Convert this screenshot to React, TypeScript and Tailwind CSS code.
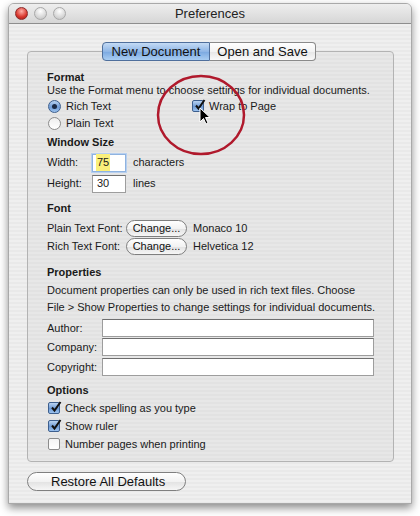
import { ReactNode } from 'react';

function Check({ on }: { on?: boolean }) {
  return (
    <span
      className={
        'relative inline-flex h-[12px] w-[12px] shrink-0 items-center justify-center rounded-[2px] border ' +
        (on
          ? 'border-[#3d5f8e] bg-[linear-gradient(#b9d3f1,#6e9bd6_55%,#9cc2ee)]'
          : 'border-[#8c8c8c] bg-[linear-gradient(#f4f4f4,#ffffff)]')
      }
    >
      {on && (
        <svg width="12" height="12" viewBox="0 0 12 12" className="absolute -top-[2px] left-[1px]">
          <path d="M2 6.5 L4.5 9.5 L10.5 1" stroke="#111" strokeWidth="2" fill="none" />
        </svg>
      )}
    </span>
  );
}

function Radio({ on }: { on?: boolean }) {
  return (
    <span
      className={
        'inline-flex h-[13px] w-[13px] shrink-0 items-center justify-center rounded-full border ' +
        (on
          ? 'border-[#3d5f8e] bg-[linear-gradient(#b9d3f1,#6e9bd6_55%,#9cc2ee)]'
          : 'border-[#8c8c8c] bg-[linear-gradient(#eeeeee,#ffffff)]')
      }
    >
      {on && <span className="h-[5px] w-[5px] rounded-full bg-[#1b2a44]" />}
    </span>
  );
}

function Pill({ children, w }: { children: ReactNode; w: string }) {
  return (
    <span
      className={
        'inline-flex h-[17px] items-center justify-center rounded-full border border-[#7f7f7f] bg-[linear-gradient(#ffffff,#f2f2f2_50%,#e2e2e2_51%,#f6f6f6)] text-[11px] text-[#111] ' +
        w
      }
    >
      {children}
    </span>
  );
}

function Field({ w, children, focus }: { w: string; children?: ReactNode; focus?: boolean }) {
  return (
    <span
      className={
        'inline-flex h-[18px] items-center border bg-white px-[3px] text-[11px] ' +
        (focus
          ? 'border-[#8fb3e0] shadow-[0_0_0_1px_#b8d0ef] '
          : 'border-[#9d9d9d] border-t-[#6f6f6f] ') +
        w
      }
    >
      {children}
    </span>
  );
}

export default function App() {
  return (
    <div className="h-[516px] w-[420px] bg-white pl-2 pt-[3px] font-['Liberation_Sans',Arial,sans-serif] text-[11px] text-[#1a1a1a]">
      <div className="flex h-[501px] w-[404px] flex-col overflow-hidden rounded-t-[6px] border border-[#a9a9a9] bg-[#ededed] bg-[repeating-linear-gradient(#efefef_0px,#efefef_2px,#e9e9e9_2px,#e9e9e9_4px)] shadow-[0_4px_8px_rgba(0,0,0,0.45)]">
        {/* title bar */}
        <div className="relative flex h-[20px] shrink-0 items-center justify-center border-b border-[#8e8e8e] bg-[linear-gradient(#eeeeee,#d6d6d6)]">
          <div className="absolute left-[6px] top-[3px] flex gap-[6px]">
            <span className="h-[13px] w-[13px] rounded-full border border-[#8a2a2a] bg-[radial-gradient(circle_at_50%_30%,#ffb0a8,#d8352c_60%,#9a1c16)]" />
            <span className="h-[13px] w-[13px] rounded-full border border-[#a8a8a8] bg-[radial-gradient(circle_at_50%_30%,#ffffff,#d8d8d8_60%,#bdbdbd)]" />
            <span className="h-[13px] w-[13px] rounded-full border border-[#a8a8a8] bg-[radial-gradient(circle_at_50%_30%,#ffffff,#d8d8d8_60%,#bdbdbd)]" />
          </div>
          <span className="text-[13px] text-[#222]">Preferences</span>
        </div>

        <div className="relative flex flex-1 flex-col pl-[18px] pt-[18px]">
          {/* tabs */}
          <div className="relative z-10 ml-[75px] flex h-[19px] w-[214px] text-[13px]">
            <div className="flex w-[108px] items-center justify-center rounded-l-[4px] border border-[#4f6f9c] bg-[linear-gradient(#c4dbf5,#8fb6e6_50%,#7aa8e0_51%,#a9cdf2)] text-[#111]">
              New Document
            </div>
            <div className="flex flex-1 items-center justify-center rounded-r-[4px] border border-l-0 border-[#8a8a8a] bg-[linear-gradient(#ffffff,#f3f3f3_50%,#e6e6e6_51%,#fafafa)] text-[#111]">
              Open and Save
            </div>
          </div>

          {/* tab box */}
          <div className="-mt-[10px] flex h-[411px] w-[367px] flex-col rounded-[4px] border border-[#b3b3b3] bg-[repeating-linear-gradient(#e7e7e7_0px,#e7e7e7_2px,#e2e2e2_2px,#e2e2e2_4px)] pl-[19px] pt-[19px]">
            <div className="flex h-[12px] items-center font-bold">Format</div>
            <div className="flex h-[14px] items-center">Use the Format menu to choose settings for individual documents.</div>
            <div className="mt-[1px] flex h-[16px] items-center">
              <div className="flex w-[145px] items-center gap-[5px] pl-[1px]">
                <Radio on />
                <span>Rich Text</span>
              </div>
              <div className="flex items-center gap-[5px]">
                <Check on />
                <span>Wrap to Page</span>
              </div>
            </div>
            <div className="mt-[1px] flex h-[16px] items-center gap-[5px] pl-[1px]">
              <Radio />
              <span>Plain Text</span>
            </div>

            <div className="mt-[4px] flex h-[14px] items-center font-bold">Window Size</div>
            <div className="mt-[4px] flex h-[19px] items-center">
              <span className="w-[45px]">Width:</span>
              <Field w="w-[34px]" focus>
                <span className="bg-[#fbf07a] px-[1px]">75</span>
              </Field>
              <span className="ml-[7px]">characters</span>
            </div>
            <div className="mt-[2px] flex h-[19px] items-center">
              <span className="w-[45px]">Height:</span>
              <Field w="w-[34px]">
                <span className="px-[1px]">30</span>
              </Field>
              <span className="ml-[7px]">lines</span>
            </div>

            <div className="mt-[8px] flex h-[14px] items-center font-bold">Font</div>
            <div className="mt-[5px] flex h-[17px] items-center">
              <span className="w-[79px]">Plain Text Font:</span>
              <Pill w="w-[61px]">Change...</Pill>
              <span className="ml-[6px]">Monaco 10</span>
            </div>
            <div className="mt-[1px] flex h-[17px] items-center">
              <span className="w-[79px]">Rich Text Font:</span>
              <Pill w="w-[61px]">Change...</Pill>
              <span className="ml-[6px]">Helvetica 12</span>
            </div>

            <div className="mt-[10px] flex h-[14px] items-center font-bold">Properties</div>
            <div className="mt-[3px] flex h-[16px] items-center">
              Document properties can only be used in rich text files. Choose
            </div>
            <div className="mt-[1px] flex h-[16px] items-center">
              File &gt; Show Properties to change settings for individual documents.
            </div>
            <div className="mt-[4px] flex h-[18px] items-center">
              <span className="w-[55px]">Author:</span>
              <Field w="w-[272px]" />
            </div>
            <div className="mt-[1px] flex h-[18px] items-center">
              <span className="w-[55px]">Company:</span>
              <Field w="w-[272px]" />
            </div>
            <div className="mt-[2px] flex h-[18px] items-center">
              <span className="w-[55px]">Copyright:</span>
              <Field w="w-[272px]" />
            </div>

            <div className="mt-[7px] flex h-[14px] items-center font-bold">Options</div>
            <div className="mt-[3px] flex h-[16px] items-center gap-[5px] pl-[1px]">
              <Check on />
              <span>Check spelling as you type</span>
            </div>
            <div className="mt-[2px] flex h-[16px] items-center gap-[5px] pl-[1px]">
              <Check on />
              <span>Show ruler</span>
            </div>
            <div className="mt-[2px] flex h-[16px] items-center gap-[5px] pl-[1px]">
              <Check />
              <span>Number pages when printing</span>
            </div>
          </div>

          <div className="mt-[10px] flex">
            <span className="inline-flex h-[19px] w-[159px] items-center rounded-full border border-[#7f7f7f] bg-[linear-gradient(#ffffff,#f2f2f2_50%,#e2e2e2_51%,#f6f6f6)] pl-[23px] text-[13px] text-[#111]">
              Restore All Defaults
            </span>
          </div>

          {/* annotation circle and pointer */}
          <svg width="100" height="90" viewBox="0 0 100 90" className="absolute left-[139px] top-[48px] z-20">
            <ellipse cx="53" cy="43" rx="43" ry="39" fill="none" stroke="#b0192c" strokeWidth="2.5" />
          </svg>
          <svg width="14" height="20" viewBox="0 0 14 20" className="absolute left-[190px] top-[83px] z-20">
            <path d="M1 1 L1 15 L4.5 11.5 L7 17 L9 16 L6.5 10.5 L11 10.5 Z" fill="#000" stroke="#fff" strokeWidth="1" />
          </svg>
        </div>
      </div>
    </div>
  );
}
